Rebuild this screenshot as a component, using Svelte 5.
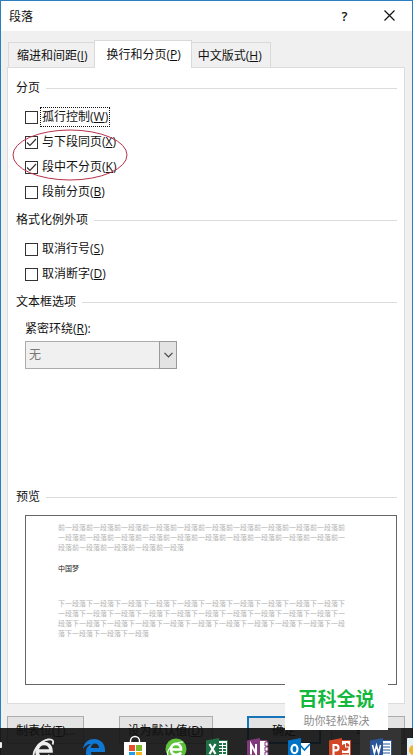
<script lang="ts">
    type Option = { text: string; key: string; checked: boolean; focused?: boolean };

    let paging: Option[] = $state([
        { text: '孤行控制', key: 'W', checked: false, focused: true },
        { text: '与下段同页', key: 'X', checked: true },
        { text: '段中不分页', key: 'K', checked: true },
        { text: '段前分页', key: 'B', checked: false },
    ]);

    let exceptions: Option[] = $state([
        { text: '取消行号', key: 'S', checked: false },
        { text: '取消断字', key: 'D', checked: false },
    ]);

    const tabs = [
        { text: '缩进和间距', key: 'I' },
        { text: '换行和分页', key: 'P' },
        { text: '中文版式', key: 'H' },
    ];
    let activeTab = $state('P');

    const before = '前一段落'.repeat(25);
    const after = '下一段落'.repeat(34);
</script>

{#snippet option(item: Option)}
    <label class="option">
        <input type="checkbox" bind:checked={item.checked} />
        <span class="option-text" class:focused={item.focused}>{item.text}(<u>{item.key}</u>)</span>
    </label>
{/snippet}

<div class="dialog">
    <header class="titlebar">
        <h1>段落</h1>
        <button class="title-button" aria-label="帮助">?</button>
        <button class="title-button" aria-label="关闭">
            <svg width="11" height="11" viewBox="0 0 11 11">
                <path d="M0.5 0.5L10.5 10.5M10.5 0.5L0.5 10.5" fill="none" stroke="#111" stroke-width="1.2" />
            </svg>
        </button>
    </header>

    <div class="tabs" role="tablist">
        {#each tabs as tab}
            <button
                class="tab"
                class:active={activeTab === tab.key}
                role="tab"
                aria-selected={activeTab === tab.key}
                onclick={() => (activeTab = tab.key)}
            >{tab.text}(<u>{tab.key}</u>)</button>
        {/each}
    </div>

    <main class="panel">
        <section>
            <h2>分页</h2>
            <div class="options">
                {#each paging as item}
                    {@render option(item)}
                {/each}
                <svg class="mark" width="116" height="54" viewBox="0 0 116 54">
                    <ellipse cx="58" cy="27" rx="57" ry="25" fill="none" stroke="#b8324c" />
                </svg>
            </div>
        </section>

        <section>
            <h2>格式化例外项</h2>
            <div class="options">
                {#each exceptions as item}
                    {@render option(item)}
                {/each}
            </div>
        </section>

        <section>
            <h2>文本框选项</h2>
            <div class="wrap-field">
                <label for="wrap">紧密环绕(<u>R</u>):</label>
                <div class="select-box">
                    <select id="wrap" disabled>
                        <option>无</option>
                    </select>
                    <span class="arrow">
                        <svg width="9" height="6" viewBox="0 0 9 6">
                            <path d="M0.5 0.8L4.5 4.8L8.5 0.8" fill="none" stroke="#444" stroke-width="1.2" />
                        </svg>
                    </span>
                </div>
            </div>
        </section>

        <section class="preview-section">
            <h2>预览</h2>
            <div class="preview">
                <p>{before}</p>
                <p class="current">中国梦</p>
                <p>{after}</p>
            </div>
        </section>
    </main>

    <footer class="actions">
        <button class="action tabstops">制表位(<u>T</u>)...</button>
        <button class="action defaults">设为默认值(<u>D</u>)</button>
        <button class="action primary">确定</button>
        <button class="action">取消</button>
    </footer>
</div>

<nav class="taskbar" aria-label="任务栏">
    <button class="app start" aria-label="任务视图">
        <svg width="2" height="24" viewBox="0 0 2 24">
            <path d="M0 4a3 3 0 0 1 0 6z" fill="#eee" />
        </svg>
    </button>
    <button class="app" aria-label="Internet Explorer">
        <svg width="24" height="24" viewBox="0 0 24 24">
            <path d="M6 13H20C20 3 6 3 6 13C6 22 17 22 19 17" fill="none" stroke="#eee" stroke-width="3.6" />
            <path d="M3 19C1 13 9 3 17 1.500c5-1 6 2 4.500 5" fill="none" stroke="#eee" stroke-width="1.800" />
        </svg>
    </button>
    <button class="app edge" aria-label="Edge">
        <svg width="24" height="24" viewBox="0 0 24 24">
            <path d="M1 11C2 4 7 1 12 1c7 0 11 5 11 11v2H9c0 7 8 7 12 4v4c-7 4-17 1-17-8 0-4 2-6 5-8-4 0-6 2-8 5zM9 10h8c0-6-8-6-8 0z" fill="#0f78d4" fill-rule="evenodd" />
        </svg>
    </button>
    <button class="app" aria-label="应用商店">
        <svg class="store" width="24" height="24" viewBox="0 0 24 24">
            <path d="M7.500 5V3a4.500 4.500 0 0 1 9 0v2" fill="none" stroke="#fff" stroke-width="1.400" />
            <path d="M1 4h22v20H1z" fill="#fff" />
            <path d="M6 7h6v6H6z" fill="#e8502a" />
            <path d="M13 7h6v6h-6z" fill="#7db928" />
            <path d="M6 14h6v6H6z" fill="#22a0e4" />
            <path d="M13 14h6v6h-6z" fill="#f8b617" />
        </svg>
    </button>
    <button class="app" aria-label="浏览器">
        <svg width="24" height="24" viewBox="0 0 24 24">
            <circle cx="12" cy="11" r="10.500" fill="#5cc238" />
            <path d="M7 11.500H17C17 4 7 4 7 11.500C7 18 15 18 17 14.500" fill="none" stroke="#fff" stroke-width="2.600" />
            <path d="M4 17C2 12 10 4 19 4" fill="none" stroke="#fff" stroke-width="1.200" />
        </svg>
    </button>
    <button class="app" aria-label="Excel">
        <svg width="24" height="24" viewBox="0 0 24 24">
            <path d="M12 2.500h10.500v18H12z" fill="#fff" stroke="#1f7145" />
            <path d="M14 5h3v2h-3zM18 5h3v2h-3zM14 8h3v2h-3zM18 8h3v2h-3zM14 11h3v2h-3zM18 11h3v2h-3zM14 14h3v2h-3zM18 14h3v2h-3z" fill="#1f7145" />
            <path d="M1 2.500L14 0v24L1 21z" fill="#1f7145" />
            <path d="M4.500 6l6 10M10.500 6L4.500 16" stroke="#fff" stroke-width="2.200" />
        </svg>
    </button>
    <button class="app" aria-label="OneNote">
        <svg width="24" height="24" viewBox="0 0 24 24">
            <path d="M12 2.500h9v18h-9z" fill="#fff" stroke="#80397b" />
            <path d="M19 4h3v4h-3zM19 9h3v4h-3zM19 14h3v4h-3z" fill="#fff" stroke="#80397b" />
            <path d="M1 2.500L14 0v24L1 21z" fill="#80397b" />
            <path d="M5 16.500V6.500l5 9V6" fill="none" stroke="#fff" stroke-width="2" />
        </svg>
    </button>
    <button class="app" aria-label="Outlook">
        <svg width="24" height="24" viewBox="0 0 24 24">
            <path d="M12 5h11v12H12z" fill="#fff" />
            <path d="M13 7l4.500 5L23 6" fill="none" stroke="#0072c6" stroke-width="1.600" />
            <path d="M1 2.500L14 0v24L1 21z" fill="#0072c6" />
            <ellipse cx="7.500" cy="11" rx="3" ry="4.200" fill="none" stroke="#fff" stroke-width="2.200" />
        </svg>
    </button>
    <button class="app" aria-label="PowerPoint">
        <svg width="24" height="24" viewBox="0 0 24 24">
            <path d="M12 2.500h10.500v18H12z" fill="#fff" stroke="#d24726" />
            <path d="M17 6a3.500 3.500 0 1 0 3.500 3.500H17zM18 5v3.500h3.500A3.500 3.500 0 0 0 18 5zM14 15h7v1.500h-7z" fill="#d24726" />
            <path d="M1 2.500L14 0v24L1 21z" fill="#d24726" />
            <path d="M5.500 17V7h2.500a2.500 2.700 0 0 1 0 5.400H5.500" fill="none" stroke="#fff" stroke-width="2.100" />
        </svg>
    </button>
    <button class="app current-app" aria-label="Word">
        <svg width="24" height="24" viewBox="0 0 24 24">
            <path d="M12 2.500h10.500v18H12z" fill="#fff" stroke="#2b579a" />
            <path d="M14 6h7M14 9h7M14 12h7M14 15h7" stroke="#2b579a" stroke-width="1.200" />
            <path d="M1 2.500L14 0v24L1 21z" fill="#2b579a" />
            <path d="M3.500 7L5.400 15L7.500 7.500L9.600 15L11.500 7" fill="none" stroke="#fff" stroke-width="1.600" />
        </svg>
    </button>
    <button class="app last-app" aria-label="画图">
        <svg width="24" height="24" viewBox="0 0 24 24">
            <rect x="0" y="-2" width="24" height="28" rx="4" fill="#e4f2f7" />
            <circle cx="7" cy="12" r="5" fill="#f2b233" />
        </svg>
    </button>
</nav>

<aside class="brand">
    <strong>百科全说</strong>
    <span>助你轻松解决</span>
</aside>

<style>
    :global(body) {
        overflow: hidden;
    }

    .dialog, .taskbar, .brand {
        font-family: "Open Sans", "Noto Sans CJK SC", sans-serif;
    }

    .dialog {
        box-sizing: border-box;
        min-height: 100vh;
        display: flex;
        flex-direction: column;
        background: #f0f0f0;
        border: 1px solid #2b7fc0;
        border-bottom: 0;
        color: #111;
        font-size: 12px;
        line-height: 18px;
    }

    button {
        font: inherit;
        color: inherit;
        padding: 0;
    }

    .titlebar {
        display: flex;
        align-items: center;
        height: 30px;
        padding-left: 8px;
        background: #fff;
    }

    h1 {
        flex: 1;
        margin: 0;
        padding-top: 2px;
        font-size: 12px;
        font-weight: 400;
    }

    .title-button {
        width: 45px;
        height: 30px;
        border: 0;
        background: none;
        font-size: 13px;
        font-weight: 600;
    }

    .tabs {
        display: flex;
        align-items: flex-end;
        padding: 9px 7px 0;
    }

    .tab {
        height: 25px;
        padding: 2px 7px 0 8px;
        border: 1px solid #d9d9d9;
        border-bottom: 0;
        border-right: 0;
        background: #f0f0f0;
    }

    .tab:last-child {
        padding: 2px 8px 0 6px;
        border-right: 1px solid #d9d9d9;
        border-left: 0;
    }

    .tab.active {
        position: relative;
        height: 28px;
        margin-bottom: -1px;
        padding: 1px 10px 0 11px;
        border-right: 1px solid #d9d9d9;
        background: #fff;
    }

    .panel {
        margin: 0 7px 0 6px;
        padding: 11px 7px 18px 8px;
        border: 1px solid #dcdcdc;
        background: #fff;
    }

    h2 {
        display: flex;
        align-items: center;
        gap: 6px;
        height: 18px;
        margin: 0;
        font-size: 12px;
        font-weight: 400;
        line-height: 20px;
    }

    h2::after {
        content: "";
        flex: 1;
        border-top: 1px solid #dcdcdc;
    }

    .options {
        position: relative;
        display: flex;
        flex-direction: column;
        align-items: flex-start;
        gap: 5px;
        padding: 10px 0 9px 9px;
    }

    .option {
        display: flex;
        align-items: center;
        gap: 3px;
        height: 20px;
    }

    .option input {
        appearance: none;
        width: 13px;
        height: 13px;
        margin: 0;
        border: 1px solid #333;
        background: #fff;
    }

    .option input:checked {
        background: #fff url("data:image/svg+xml,%3Csvg xmlns='http://www.w3.org/2000/svg' viewBox='0 0 11 11'%3E%3Cpath d='M1 5.500L4 8.500L10 2' fill='none' stroke='%23333' stroke-width='1.200'/%3E%3C/svg%3E");
    }

    .option-text {
        padding: 0 1px;
        line-height: 18px;
    }

    .option-text.focused {
        outline: 1px dotted #111;
    }

    .mark {
        position: absolute;
        top: 31px;
        left: -4px;
        pointer-events: none;
    }

    .wrap-field {
        display: flex;
        flex-direction: column;
        gap: 3px;
        padding: 9px 0 0 9px;
    }

    .select-box {
        display: grid;
        width: 152px;
    }

    .select-box > * {
        grid-area: 1 / 1;
    }

    .wrap-field select {
        appearance: none;
        height: 28px;
        padding: 0 3px;
        border: 1px solid #acacac;
        border-radius: 0;
        background: #f0f0f0;
        color: #777;
        opacity: 1;
        font: inherit;
    }

    .arrow {
        justify-self: end;
        display: flex;
        align-items: center;
        justify-content: center;
        box-sizing: border-box;
        width: 18px;
        border: 1px solid #999;
        background: #e3e3e3;
        pointer-events: none;
    }

    .preview-section {
        margin-top: 119px;
    }

    .preview {
        margin: 9px 0 0 9px;
        padding: 7px 48px 45px 32px;
        border: 1px solid #666;
        color: #b4b4b4;
        font-size: 7px;
        line-height: 10px;
    }

    .preview p {
        margin: 0;
    }

    .preview .current {
        margin: 11px 0 25px;
        color: #222;
    }

    .actions {
        display: flex;
        gap: 10px;
        padding: 12px 7px 12px 6px;
    }

    .action {
        box-sizing: border-box;
        width: 74px;
        height: 28px;
        padding-top: 1px;
        border: 1px solid #adadad;
        background: #e3e3e3;
    }

    .tabstops {
        width: 77px;
    }

    .defaults {
        width: 94px;
        margin: 0 auto;
    }

    .primary {
        border: 2px solid #1874b8;
    }

    .taskbar {
        position: fixed;
        left: 0;
        right: 0;
        bottom: 0;
        display: flex;
        height: 27px;
        overflow: hidden;
        background: rgba(16, 16, 16, 0.91);
    }

    .app {
        flex: none;
        display: flex;
        justify-content: center;
        width: 41px;
        padding-top: 10px;
        border: 0;
        background: none;
    }

    .start {
        justify-content: flex-start;
        width: 22px;
    }

    .edge {
        margin-left: 10px;
    }

    .store {
        overflow: visible;
    }

    .current-app {
        background: #343434;
    }

    .last-app {
        justify-content: flex-start;
        padding-left: 6px;
    }

    .brand {
        position: fixed;
        right: 25px;
        bottom: 25px;
        display: flex;
        flex-direction: column;
        align-items: center;
        width: 103px;
        padding: 3px 0 1px;
        background: #fff;
    }

    .brand strong {
        color: #14b83c;
        font-size: 19px;
        font-weight: 700;
        line-height: 28px;
    }

    .brand span {
        color: #8c8c8c;
        font-size: 11px;
        line-height: 16px;
    }
</style>
